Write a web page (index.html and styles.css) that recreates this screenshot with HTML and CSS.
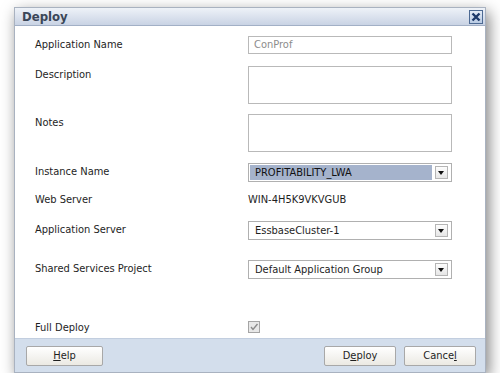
FILE: index.html
```html
<!DOCTYPE html>
<html lang="en">
<head>
    <meta charset="UTF-8">
    <title>Deploy</title>
    <link rel="stylesheet" href="styles.css">
</head>
<body>

    <div class="dialog">
        <!-- Title bar -->
        <div class="titlebar">
            <span class="title">Deploy</span>
            <span class="close">
                <svg width="10" height="10" viewBox="0 0 10 10"><path d="M1.5 1.5 L8.5 8.5 M8.5 1.5 L1.5 8.5" stroke="#1d3a6b" stroke-width="2.4"/></svg>
            </span>
        </div>

        <!-- Form -->
        <div class="form">
            <div class="label">Application Name</div>
            <div><div class="input disabled">ConProf</div></div>

            <div class="label">Description</div>
            <div><div class="textarea"></div></div>

            <div class="label">Notes</div>
            <div><div class="textarea"></div></div>

            <div class="label">Instance Name</div>
            <div>
                <div class="select selected">
                    <span class="value">PROFITABILITY_LWA</span>
                    <span class="arrow"></span>
                </div>
            </div>

            <div class="label">Web Server</div>
            <div class="plain">WIN-4H5K9VKVGUB</div>

            <div class="label">Application Server</div>
            <div>
                <div class="select">
                    <span class="value">EssbaseCluster-1</span>
                    <span class="arrow"></span>
                </div>
            </div>

            <div class="label">Shared Services Project</div>
            <div>
                <div class="select">
                    <span class="value">Default Application Group</span>
                    <span class="arrow"></span>
                </div>
            </div>

            <div class="label">Full Deploy</div>
            <div>
                <span class="checkbox">
                    <svg width="10" height="10" viewBox="0 0 10 10"><path d="M2 5 L4 7.5 L8.5 2" fill="none" stroke="#8a8a8a" stroke-width="1.4"/></svg>
                </span>
            </div>
        </div>

        <!-- Buttons -->
        <div class="footer">
            <a class="button help"><u>H</u>elp</a>
            <div class="spacer"></div>
            <a class="button">D<u>e</u>ploy</a>
            <a class="button">Cance<u>l</u></a>
        </div>
    </div>

</body>
</html>
```

FILE: styles.css
```css
body {
    margin: 0;
    padding: 0;
    background-color: #fff;
    font-family: "DejaVu Sans Condensed", "DejaVu Sans", sans-serif;
    font-stretch: condensed;
    font-size: 11px;
    color: #1e1e1e;
}

.dialog {
    width: 470px;
    margin: 7px 0 0 14px;
    background-color: #fff;
    border: 1px solid #a9b2c0;
    box-shadow: 3px 5px 14px rgba(0, 0, 0, 0.5);
}

.titlebar {
    display: flex;
    align-items: center;
    height: 17px;
    padding: 0 2px 0 7px;
    background: linear-gradient(#eef2f8, #c9d3e4);
    border-bottom: 1px solid #a2b0c6;
}

.title {
    flex: 1;
    font-weight: bold;
    font-size: 13px;
    color: #3a4657;
}

.close {
    display: flex;
    align-items: center;
    justify-content: center;
    width: 12px;
    height: 12px;
    border: 1px solid #4d6a93;
    background: linear-gradient(#e4ecf7, #b9cbe4);
}

.form {
    display: grid;
    grid-template-columns: 213px 204px;
    grid-template-rows: 30px 48px 49px 28px 30px 39px 59px 19px;
    padding: 10px 0 0 20px;
}

.label {
    padding-top: 2px;
    line-height: 13px;
}

.plain {
    padding-top: 2px;
    line-height: 13px;
}

.input {
    box-sizing: border-box;
    height: 18px;
    padding: 2px 5px;
    line-height: 12px;
    border: 1px solid #b9b9b9;
}

.input.disabled {
    color: #8c8c8c;
}

.textarea {
    box-sizing: border-box;
    height: 38px;
    border: 1px solid #b9b9b9;
}

.select {
    box-sizing: border-box;
    display: flex;
    align-items: center;
    height: 19px;
    padding: 1px;
    border: 1px solid #b0b0b0;
}

.select .value {
    flex: 1;
    height: 15px;
    line-height: 15px;
    padding-left: 5px;
}

.select.selected .value {
    background-color: #a5b3cc;
    color: #111;
}

.select .arrow {
    position: relative;
    box-sizing: border-box;
    width: 13px;
    height: 13px;
    margin: 0 2px 0 3px;
    border: 1px solid #b5b5b5;
    background: linear-gradient(#fdfdfd, #e6e6e6);
}

.select .arrow::after {
    content: "";
    position: absolute;
    left: 2px;
    top: 4px;
    border-left: 3.5px solid transparent;
    border-right: 3.5px solid transparent;
    border-top: 4px solid #111;
}

.checkbox {
    display: flex;
    align-items: center;
    justify-content: center;
    box-sizing: border-box;
    width: 12px;
    height: 12px;
    margin-top: 2px;
    border: 1px solid #a5a5a5;
    background-color: #e8e8e8;
}

.footer {
    display: flex;
    align-items: center;
    gap: 8px;
    height: 33px;
    padding: 0 9px 0 11px;
    background-color: #d3deec;
    border-top: 1px solid #c2cedf;
}

.spacer {
    flex: 1;
}

.button {
    box-sizing: border-box;
    width: 72px;
    height: 20px;
    line-height: 18px;
    text-align: center;
    color: #1e1e1e;
    border: 1px solid #a8a8a8;
    border-radius: 2px;
    background: linear-gradient(#ffffff, #ebe9e3);
    text-decoration: none;
}

.button.help {
    width: 77px;
}
```
